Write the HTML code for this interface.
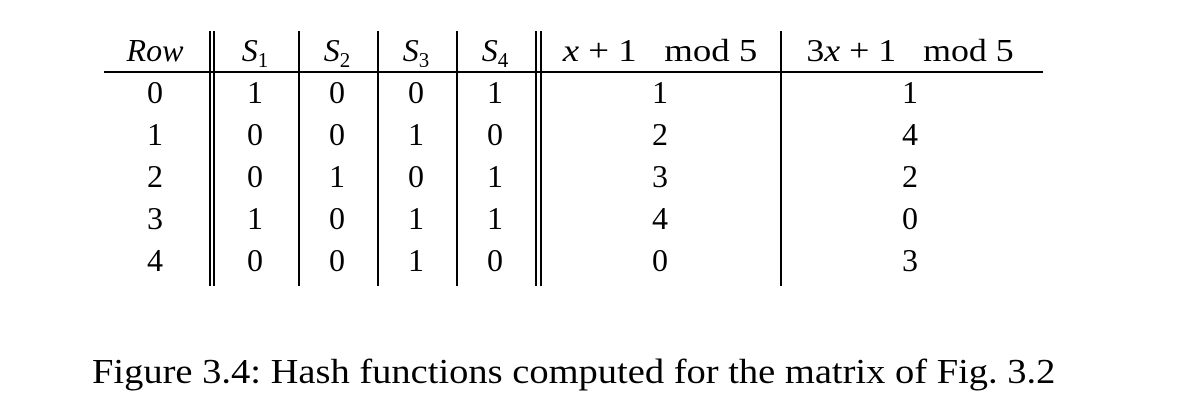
<!DOCTYPE html>
<html><head><style>
body{margin:0;width:1198px;height:414px;background:#fff;position:relative;overflow:hidden;font-family:"Liberation Serif",serif;color:#000}
.t{position:absolute;font-size:32px;line-height:32px;transform:translateX(-50%);white-space:nowrap}
.v{position:absolute;top:31px;height:255px;width:1.5px;background:#000}
i{font-style:italic}
sub{font-size:21px;vertical-align:-6px;line-height:0}
</style></head><body>
<div style="position:absolute;left:104px;top:71px;width:939px;height:1.5px;background:#000"></div>
<div class="v" style="left:209px"></div><div class="v" style="left:213px"></div>
<div class="v" style="left:298px"></div><div class="v" style="left:377px"></div><div class="v" style="left:456px"></div>
<div class="v" style="left:535px"></div><div class="v" style="left:540px"></div>
<div class="v" style="left:780px"></div>

<div class="t" style="left:155px;top:34px"><i>Row</i></div>
<div class="t" style="left:255px;top:34px"><i>S</i><sub>1</sub></div>
<div class="t" style="left:337px;top:34px"><i>S</i><sub>2</sub></div>
<div class="t" style="left:416px;top:34px"><i>S</i><sub>3</sub></div>
<div class="t" style="left:495px;top:34px"><i>S</i><sub>4</sub></div>
<div class="t" style="left:660px;top:34px;transform:translateX(-50%) scaleX(1.15)"><i>x</i> + 1&nbsp;&nbsp; mod 5</div>
<div class="t" style="left:910px;top:34px;transform:translateX(-50%) scaleX(1.12)">3<i>x</i> + 1&nbsp;&nbsp; mod 5</div>

<div id="rows"></div>
<script>
var d=[[0,1,0,0,1,1,1],[1,0,0,1,0,2,4],[2,0,1,0,1,3,2],[3,1,0,1,1,4,0],[4,0,0,1,0,0,3]];
var xs=[155,255,337,416,495,660,910],h='';
d.forEach(function(r,i){r.forEach(function(v,j){h+='<div class="t" style="left:'+xs[j]+'px;top:'+(76+i*42)+'px">'+v+'</div>';});});
document.getElementById('rows').innerHTML=h;
</script>
<div style="position:absolute;left:92px;top:354px;font-size:35px;line-height:36px;white-space:nowrap;transform-origin:0 0;transform:scaleX(1.1)">Figure 3.4: Hash functions computed for the matrix of Fig. 3.2</div>
</body></html>
